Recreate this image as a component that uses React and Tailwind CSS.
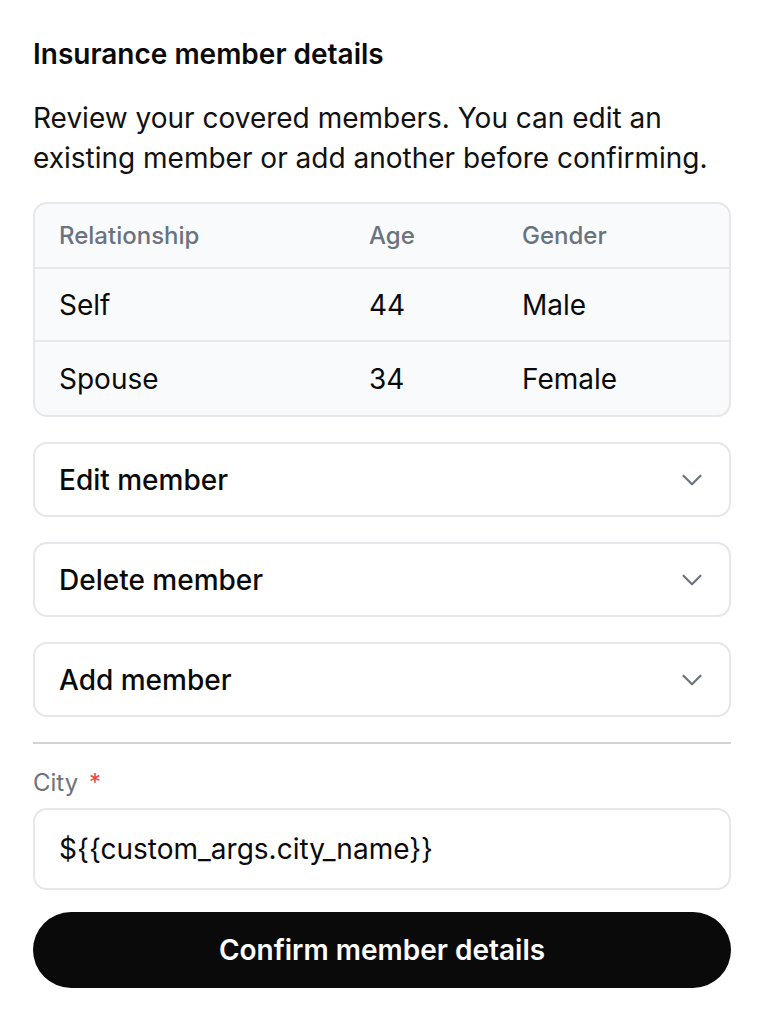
import React from "react";

function Chevron() {
  return (
    <svg width="34" height="34" viewBox="0 0 24 24" fill="none" stroke="#6b7280" strokeWidth="1.5" strokeLinecap="round" strokeLinejoin="round">
      <path d="M6 9l6 6 6-6" />
    </svg>
  );
}

function Accordion({ label }) {
  return (
    <div className="flex h-[75px] items-center justify-between rounded-[14px] border-2 border-[#e5e7eb] bg-white pl-[24px] pr-[20px]">
      <span className="text-[28px] font-medium text-[#0a0a0a]">{label}</span>
      <Chevron />
    </div>
  );
}

export default function App() {
  const rows = [
    ["Self", "44", "Male"],
    ["Spouse", "34", "Female"],
  ];
  return (
    <div className="min-h-[1020px] bg-white px-[33px] pt-[36px] text-[#0a0a0a]" style={{ fontFamily: "Inter, 'Noto Sans', sans-serif" }}>
      <h1 className="text-[28px] font-semibold leading-[36px]">Insurance member details</h1>
      <p className="mt-[26px] text-[28px] leading-[40px] text-[#111]">
        Review your covered members. You can edit an existing member or add another before confirming.
      </p>
      <div className="mt-[24px] overflow-hidden rounded-[14px] border-2 border-[#e5e7eb] bg-[#f9fafb]">
        <div className="grid h-[65px] grid-cols-[310px_153px_1fr] items-center border-b-2 border-[#e5e7eb] px-[24px] text-[24px] font-medium text-[#6b7280]">
          <span>Relationship</span>
          <span>Age</span>
          <span>Gender</span>
        </div>
        {rows.map((r, i) => (
          <div key={i} className={`grid h-[73px] grid-cols-[310px_153px_1fr] items-center px-[24px] text-[28px] ${i === 0 ? "border-b-2 border-[#e5e7eb]" : ""}`}>
            <span>{r[0]}</span>
            <span>{r[1]}</span>
            <span>{r[2]}</span>
          </div>
        ))}
      </div>
      <div className="mt-[25px] flex flex-col gap-[25px]">
        <Accordion label="Edit member" />
        <Accordion label="Delete member" />
        <Accordion label="Add member" />
      </div>
      <div className="mt-[25px] h-[2px] bg-[#d4d4d8]" />
      <div className="mt-[22px] text-[24px] leading-[34px] text-[#6b7280]">
        City <span className="ml-[4px] text-[#ef4444]">*</span>
      </div>
      <div className="mt-[8px] flex h-[82px] items-center rounded-[14px] border-2 border-[#e5e7eb] px-[24px] text-[28px]">
        {"${{custom_args.city_name}}"}
      </div>
      <button className="mt-[22px] flex h-[76px] w-full items-center justify-center rounded-full bg-[#0a0a0a] text-[28px] font-semibold text-white">
        Confirm member details
      </button>
    </div>
  );
}
